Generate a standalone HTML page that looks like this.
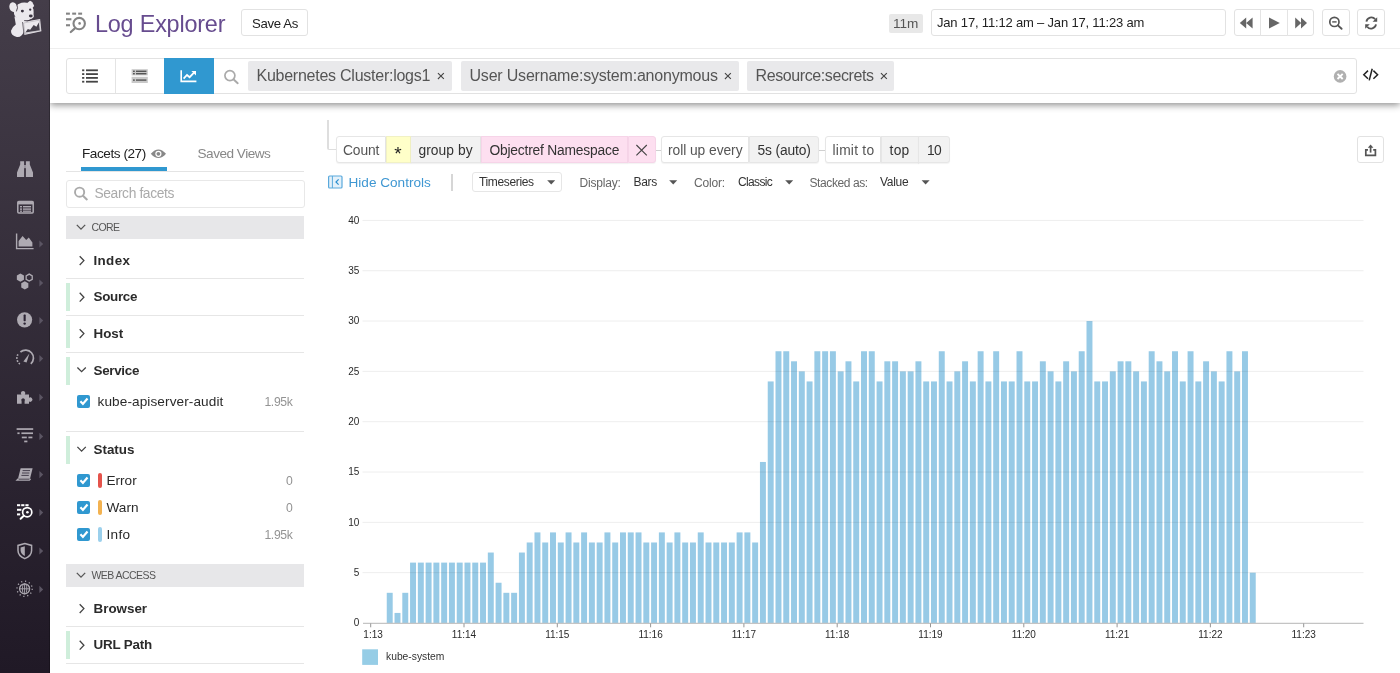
<!DOCTYPE html>
<html lang="en">
<head>
<meta charset="utf-8">
<title>Log Explorer</title>
<style>
*{box-sizing:border-box;margin:0;padding:0}
html,body{width:1400px;height:673px;overflow:hidden;background:#fff}
body{will-change:transform;font-family:"Liberation Sans",sans-serif;color:#333;position:relative;font-size:14px}
.abs,.t,.box,.btn,.tok,.pill,.hd,.sep,.gbar,.cb,.ic{position:absolute}
.t{white-space:nowrap;line-height:1}
svg{position:absolute;overflow:visible}
.chart{left:0;top:0}
#side{position:absolute;left:0;top:0;width:49.5px;z-index:2;height:673px;background:linear-gradient(180deg,#443d49 0%,#201926 100%);border-right:1px solid rgba(0,0,0,.25)}
#top{position:absolute;left:50px;top:0;width:1350px;height:103px;background:#fff;box-shadow:0 2px 7px 0 rgba(0,0,0,.45)}
#topline{position:absolute;left:50px;top:48px;width:1350px;height:1px;background:#eeeeee}
.btn{border:1px solid #e2e2e2;border-radius:3px;background:#fff}
.box{border:1px solid #e2e2e2;border-radius:3px;background:#fff}
.tok{top:61px;height:29.6px;background:#e9e9eb;border-radius:2px}
.pill{top:136.4px;height:27px;border:1px solid #e6e6e6;box-shadow:0 1px 1px rgba(0,0,0,.05)}
.hd{left:66px;width:238px;height:23px;background:#e7e7e9}
.sep{left:66px;width:238px;height:1px;background:#e6e6e6}
.gbar{left:66px;width:3.5px;background:#cfeedb}
.cb{left:76.7px;width:13.5px;height:13.5px;border-radius:2px;background:#3098d0}
.f{font-weight:700;font-size:13.4px;color:#2b2b2b;margin-top:.6px}
.v{font-size:13.6px;color:#2a2a2a}
.n{font-size:12.2px;color:#939393;letter-spacing:-.35px;margin-top:.7px}
.c{font-size:12px;color:#333}
.l{font-size:12px;color:#666}
</style>
</head>
<body>
<!-- sidebar -->
<div id="side"></div>
<!-- top -->
<div id="top"></div>
<div id="topline"></div>

<!--SIDEICONS-->

<!-- header -->
<div class="t" id="title" style="left:95px;top:13px;font-size:23.4px;color:#674c8f;letter-spacing:-.2px">Log Explorer</div>
<div class="btn" style="left:241.2px;top:9.2px;width:67px;height:27px"></div>
<div class="t" style="left:252px;top:16.5px;font-size:13.2px;color:#222;letter-spacing:-.35px">Save As</div>

<div class="abs" style="left:889px;top:14px;width:33.5px;height:18.5px;background:#e8e8e8;border-radius:2px"></div>
<div class="t" style="left:893px;top:16.5px;font-size:13.6px;color:#555">11m</div>
<div class="box" style="left:931px;top:9.2px;width:294.5px;height:27px"></div>
<div class="t" style="left:937px;top:16px;font-size:13px;color:#222;letter-spacing:-.18px">Jan 17, 11:12 am – Jan 17, 11:23 am</div>
<div class="btn" style="left:1233.5px;top:9.2px;width:80.5px;height:27px"></div>
<div class="abs" style="left:1260px;top:10px;width:1px;height:26px;background:#e4e4e4"></div>
<div class="abs" style="left:1286.5px;top:10px;width:1px;height:26px;background:#e4e4e4"></div>
<div class="btn" style="left:1322px;top:9.2px;width:27.5px;height:27px"></div>
<div class="btn" style="left:1357px;top:9.2px;width:27.5px;height:27px"></div>

<!-- search bar -->
<div class="box" style="left:66px;top:58px;width:1290.5px;height:35.5px"></div>
<div class="abs" style="left:114.5px;top:59px;width:1px;height:33.5px;background:#e4e4e4"></div>
<div class="abs" style="left:164px;top:58px;width:49.5px;height:35.5px;background:#3098d0"></div>
<div class="tok" style="left:248px;width:204px"></div>
<div class="t" style="left:256.5px;top:67.9px;font-size:16px;color:#555;letter-spacing:-.25px">Kubernetes Cluster:logs1</div>
<div class="t" style="left:436.5px;top:67.6px;font-size:15px;color:#444">×</div>
<div class="tok" style="left:460.5px;width:278px"></div>
<div class="t" style="left:469.5px;top:67.9px;font-size:16px;color:#555;letter-spacing:-.2px">User Username:system:anonymous</div>
<div class="t" style="left:723.5px;top:67.6px;font-size:15px;color:#444">×</div>
<div class="tok" style="left:747px;width:147px"></div>
<div class="t" style="left:755.5px;top:67.9px;font-size:16px;color:#555;letter-spacing:-.4px">Resource:secrets</div>
<div class="t" style="left:879.5px;top:67.6px;font-size:15px;color:#444">×</div>

<!-- left panel -->
<div class="t" style="left:82px;top:147.2px;font-size:13.6px;color:#222;letter-spacing:-.45px">Facets (27)</div>
<div class="t" style="left:197.5px;top:147.2px;font-size:13.6px;color:#888;letter-spacing:-.5px">Saved Views</div>
<div class="abs" style="left:66px;top:170.5px;width:238px;height:1px;background:#e4e4e4"></div>
<div class="abs" style="left:81px;top:167px;width:86px;height:4px;background:#3098d0"></div>
<div class="box" style="left:66px;top:180px;width:238.5px;height:27.5px;border-color:#e8e8e8"></div>
<div class="t" style="left:94.5px;top:186.5px;font-size:13.8px;color:#aaa;letter-spacing:-.38px">Search facets</div>

<div class="hd" style="top:215.5px"></div>
<div class="t" style="left:91.5px;top:222px;font-size:10.5px;color:#555;letter-spacing:-.6px">CORE</div>
<div class="t f" style="left:93.5px;top:253.5px;letter-spacing:.35px">Index</div>
<div class="sep" style="top:278px"></div>
<div class="gbar" style="top:283px;height:28px"></div>
<div class="t f" style="left:93.5px;top:289.3px;letter-spacing:-.3px">Source</div>
<div class="sep" style="top:315px"></div>
<div class="gbar" style="top:320px;height:28px"></div>
<div class="t f" style="left:93.5px;top:326.5px">Host</div>
<div class="sep" style="top:352px"></div>
<div class="gbar" style="top:357px;height:28px"></div>
<div class="t f" style="left:93.5px;top:363px;letter-spacing:-.3px">Service</div>
<div class="cb" style="top:394.5px"></div>
<div class="t v" style="left:97.5px;top:394.5px;letter-spacing:.1px">kube-apiserver-audit</div>
<div class="t n" style="right:1107.5px;top:395px">1.95k</div>
<div class="sep" style="top:431px"></div>
<div class="gbar" style="top:436px;height:28px"></div>
<div class="t f" style="left:93.5px;top:442px">Status</div>
<div class="cb" style="top:473.5px"></div>
<div class="abs" style="left:97.5px;top:472.5px;width:4.5px;height:15.5px;border-radius:2px;background:#e5534b"></div>
<div class="t v" style="left:106.5px;top:473.5px">Error</div>
<div class="t n" style="right:1107.5px;top:474px">0</div>
<div class="cb" style="top:500.5px"></div>
<div class="abs" style="left:97.5px;top:499.5px;width:4.5px;height:15.5px;border-radius:2px;background:#f3b250"></div>
<div class="t v" style="left:106.5px;top:500.5px">Warn</div>
<div class="t n" style="right:1107.5px;top:501px">0</div>
<div class="cb" style="top:527.5px"></div>
<div class="abs" style="left:97.5px;top:526.5px;width:4.5px;height:15.5px;border-radius:2px;background:#9bd0ec"></div>
<div class="t v" style="left:106.5px;top:527.5px;letter-spacing:.3px">Info</div>
<div class="t n" style="right:1107.5px;top:528px">1.95k</div>
<div class="hd" style="top:563.5px;height:23.2px"></div>
<div class="t" style="left:91.5px;top:570.2px;font-size:10.5px;color:#555;letter-spacing:-.55px">WEB ACCESS</div>
<div class="t f" style="left:93.5px;top:601.5px">Browser</div>
<div class="sep" style="top:626px"></div>
<div class="gbar" style="top:631.2px;height:27.4px"></div>
<div class="t f" style="left:93.5px;top:637.2px;letter-spacing:-.2px">URL Path</div>
<div class="sep" style="top:662.7px"></div>

<!-- query pills -->
<div class="abs" style="left:327px;top:120px;width:9px;height:30px;border-left:2px solid #dedede;border-bottom:1.5px solid #dedede;border-bottom-left-radius:2px"></div>
<div class="abs" style="left:655px;top:150px;width:7px;height:1px;background:#d0d0d0"></div>
<div class="abs" style="left:818px;top:150px;width:9px;height:1px;background:#d0d0d0"></div>
<div class="pill" style="left:336px;width:50px;background:#fff;border-radius:3px 0 0 3px"></div>
<div class="pill" style="left:386px;width:24.5px;background:#ffffc9;border-color:#f1f1c4"></div>
<div class="pill" style="left:410.5px;width:70.5px;background:#f2f2f2;border-left:0"></div>
<div class="pill" style="left:481px;width:147px;background:#fddff0;border-color:#f6d4e8"></div>
<div class="pill" style="left:628px;width:27.5px;background:#fddff0;border-color:#f6d4e8;border-radius:0 3px 3px 0"></div>
<div class="pill" style="left:660.8px;width:88.7px;background:#fff;border-radius:3px 0 0 3px"></div>
<div class="pill" style="left:749px;width:70px;background:#f2f2f2;border-radius:0 3px 3px 0"></div>
<div class="pill" style="left:825.4px;width:56.1px;background:#fff;border-radius:3px 0 0 3px"></div>
<div class="pill" style="left:881px;width:37.5px;background:#f2f2f2"></div>
<div class="pill" style="left:917.5px;width:32px;background:#f2f2f2;border-radius:0 3px 3px 0"></div>
<div class="t" style="left:343px;top:143.8px;font-size:13.8px;color:#555;letter-spacing:-.1px">Count</div>
<div class="t" style="left:394.3px;top:143.6px;font-size:19px;color:#222">*</div>
<div class="t" style="left:418.5px;top:143.8px;font-size:13.8px;color:#333;letter-spacing:.05px">group by</div>
<div class="t" style="left:489.5px;top:143.8px;font-size:13.8px;color:#333;letter-spacing:-.2px">Objectref Namespace</div>
<div class="t" style="left:668px;top:143.8px;font-size:13.8px;color:#555;letter-spacing:-.05px">roll up every</div>
<div class="t" style="left:757.5px;top:143.8px;font-size:13.8px;color:#333;letter-spacing:-.15px">5s (auto)</div>
<div class="t" style="left:832.5px;top:143.8px;font-size:13.8px;color:#555;letter-spacing:.25px">limit to</div>
<div class="t" style="left:889.5px;top:143.8px;font-size:13.8px;color:#333;letter-spacing:.3px">top</div>
<div class="t" style="left:927px;top:143.8px;font-size:13.8px;color:#333;letter-spacing:-.7px">10</div>
<div class="btn" style="left:1356.8px;top:136.4px;width:27px;height:27px"></div>

<!-- controls row -->
<div class="t" style="left:348.5px;top:175.6px;font-size:13.6px;color:#3f97d2;letter-spacing:0px">Hide Controls</div>
<div class="abs" style="left:451px;top:173.5px;width:1.5px;height:17px;background:#d6d6d6"></div>
<div class="box" style="left:471.8px;top:171.8px;width:90.6px;height:20px;border-color:#e6e6e6"></div>
<div class="t c" style="left:479px;top:175.5px;letter-spacing:-.35px">Timeseries</div>
<div class="t l" style="left:579.5px;top:176.5px;letter-spacing:-.2px">Display:</div>
<div class="t c" style="left:633.5px;top:175.5px;letter-spacing:-.3px">Bars</div>
<div class="t l" style="left:694px;top:176.5px;letter-spacing:-.2px">Color:</div>
<div class="t c" style="left:738px;top:175.5px;letter-spacing:-.65px">Classic</div>
<div class="t l" style="left:809.5px;top:176.5px;letter-spacing:-.4px">Stacked as:</div>
<div class="t c" style="left:880px;top:175.5px;letter-spacing:-.3px">Value</div>

<svg width="1400" height="673" viewBox="0 0 1400 673" style="left:0;top:0;z-index:3"><g fill="#ebe8ed">
<ellipse cx="13.3" cy="7.2" rx="3.9" ry="4.9" transform="rotate(-18 13.3 7.2)"/>
<path d="M26.6 3.6L30 0.8Q32.4 1.4 34.2 6L31.6 8.8Z"/>
<ellipse cx="23.8" cy="11.8" rx="10" ry="9.2" transform="rotate(-14 23.8 11.8)"/>
<path d="M28 8Q34.4 12.6 33.8 17Q30 21 25 20.4Z"/>
<path d="M14.4 16.5L27 21.5L24 31Q21.8 37.8 16.8 37Q10.8 35.6 11 30.8Q12.4 26.8 15.8 24.6Z"/>
<path d="M22.5 22L40.1 18.9L41.4 31.2L24.1 34.9Z"/>
</g>
<path d="M16.8 4.4Q18.4 7.6 16.4 11.4" fill="none" stroke="#3f3844" stroke-width=".9"/>
<path d="M24.2 20.6Q28.4 21.6 31 19.6" fill="none" stroke="#3f3844" stroke-width=".9"/>
<path d="M23.6 23L39.4 20.2L40.3 30.4L25 33.6Z" fill="none" stroke="#a9a5ad" stroke-width=".5"/>
<path d="M25.4 32.6L27.8 29.1L30.2 29.7L33.7 25L36.4 26.8L38.8 22.6L39.8 30.2Z" fill="#45404b"/>
<ellipse cx="22.4" cy="11.1" rx="1.5" ry="1.3" fill="#3a3440"/>
<ellipse cx="30.2" cy="9.6" rx="1.1" ry="1.2" fill="#3a3440"/>
<ellipse cx="30.8" cy="16" rx="1.9" ry="1.4" fill="#3a3440"/>
<path d="M22.5 22L24.1 34.9" stroke="#55505a" stroke-width=".8"/><g fill="#aeaab2"><path d="M20.2 161.2h3.9v15.8h-7.1v-4.6l3.2-8z"/><path d="M29.8 161.2h-3.9v15.8h7.1v-4.6l-3.2-8z"/><rect x="24" y="165" width="2" height="3.2" opacity=".8"/></g><g fill="none" stroke="#aeaab2" stroke-width="1.5"><rect x="17.8" y="201.4" width="15.4" height="11.6" rx="1"/></g><g fill="#aeaab2"><rect x="17.8" y="201.4" width="15.4" height="3"/><rect x="20" y="206" width="2" height="1.4"/><rect x="23" y="206" width="8" height="1.4"/><rect x="20" y="208.4" width="2" height="1.4"/><rect x="23" y="208.4" width="8" height="1.4"/><rect x="20" y="210.6" width="2" height="1.2"/><rect x="23" y="210.6" width="8" height="1.2"/></g><g><path d="M16.6 233.5V248.6H33.6" fill="none" stroke="#aeaab2" stroke-width="1.4"/><path d="M18.6 246.6V241l4-5 3.6 4 2.6-2.6 3.6 5v4.2z" fill="#aeaab2"/></g><path d="M39.4 240.4L43.199999999999996 244L39.4 247.6Z" fill="#5b5563"/><polygon points="23.95,279.65 20.40,281.70 16.85,279.65 16.85,275.55 20.40,273.50 23.95,275.55" fill="#aeaab2"/><polygon points="32.23,279.35 29.20,281.10 26.17,279.35 26.17,275.85 29.20,274.10 32.23,275.85" fill="none" stroke="#aeaab2" stroke-width="1.3"/><polygon points="28.35,287.45 24.80,289.50 21.25,287.45 21.25,283.35 24.80,281.30 28.35,283.35" fill="#aeaab2"/><path d="M39.4 279.4L43.199999999999996 283L39.4 286.6Z" fill="#5b5563"/><circle cx="24.6" cy="319.8" r="7.6" fill="#aeaab2"/><rect x="23.6" y="314.6" width="2.1" height="6.6" rx=".6" fill="#2b2333"/><circle cx="24.65" cy="323.6" r="1.2" fill="#2b2333"/><path d="M39.4 317.0L43.199999999999996 320.6L39.4 324.20000000000005Z" fill="#5b5563"/><path d="M19.9 364A7.3 7.3 0 0 1 18.6 353.4" fill="none" stroke="#aeaab2" stroke-width="1.6" stroke-dasharray="1.6 1.4"/><path d="M20.4 352A7.3 7.3 0 0 1 30.8 363.8" fill="none" stroke="#aeaab2" stroke-width="1.7"/><path d="M23.4 361.6L29.4 353.4L26.6 362.4Z" fill="#aeaab2"/><path d="M39.4 355.0L43.199999999999996 358.6L39.4 362.20000000000005Z" fill="#5b5563"/><path d="M17 394.6h4.4a2.2 2.2 0 1 1 3.4 0h4.2v3.2a2.2 2.2 0 1 1 0 3.6v2.4h-4.4v-2.6a1.8 1.8 0 1 0 -3 0v2.6h-4.6z" fill="#aeaab2"/><path d="M39.4 393.79999999999995L43.199999999999996 397.4L39.4 401.0Z" fill="#5b5563"/><g fill="#aeaab2"><rect x="16.6" y="428.2" width="16.6" height="1.7"/><rect x="17.4" y="432.4" width="2.2" height="1.7"/><rect x="21.4" y="432.4" width="11.6" height="1.7"/><rect x="21.8" y="436.6" width="5" height="1.7"/><rect x="28.4" y="436.6" width="4" height="1.7"/><rect x="24.2" y="440.6" width="3.2" height="1.7"/></g><path d="M39.4 432.79999999999995L43.199999999999996 436.4L39.4 440.0Z" fill="#5b5563"/><g><path d="M20.6 468.2h12l-2.6 10.6h-12z" fill="#aeaab2"/><path d="M18.4 478.8l-1.4 1.4h12.4l1.2-1.4" fill="none" stroke="#aeaab2" stroke-width="1.3"/><path d="M22.6 470.6h7.4M22 473h7.4M21.4 475.4h7.4" stroke="#2b2333" stroke-width=".8"/></g><path d="M39.4 471.0L43.199999999999996 474.6L39.4 478.20000000000005Z" fill="#5b5563"/><g fill="#ffffff"><rect x="17" y="504.2" width="3.2" height="2"/><rect x="21.2" y="504.2" width="3.2" height="2"/><rect x="25.4" y="504.2" width="3.2" height="2"/><rect x="17" y="508.8" width="4.4" height="2"/><rect x="17" y="513.4" width="3.2" height="2"/></g><circle cx="27.2" cy="512.2" r="4.6" fill="none" stroke="#ffffff" stroke-width="1.7"/><circle cx="27.4" cy="512.2" r="1.3" fill="#ffffff"/><path d="M23.8 515.8L20.6 518.8" stroke="#ffffff" stroke-width="2" stroke-linecap="round"/><path d="M39.4 509.0L43.199999999999996 512.6L39.4 516.2Z" fill="#5b5563"/><path d="M24.8 543.6l6.8 1.8v5.2c0 4-3 6.6-6.8 8c-3.8-1.4-6.8-4-6.8-8v-5.2z" fill="none" stroke="#aeaab2" stroke-width="1.5"/><path d="M24.8 546.2v9.8c-2.4-1-4.2-2.8-4.2-5.4v-3.2z" fill="#aeaab2"/><path d="M39.4 547.4L43.199999999999996 551L39.4 554.6Z" fill="#5b5563"/><g fill="none" stroke="#aeaab2"><circle cx="24.6" cy="588.8" r="5" stroke-width="1.3"/><ellipse cx="24.6" cy="588.8" rx="2.2" ry="5" stroke-width=".9"/><path d="M19.6 588.8h10M24.6 583.8v10" stroke-width=".9"/><circle cx="24.6" cy="588.8" r="7.6" stroke-width="1.3" stroke-dasharray="1.2 2.8"/></g><path d="M39.4 585.8L43.199999999999996 589.4L39.4 593.0Z" fill="#5b5563"/><g fill="#848484"><rect x="66" y="12.6" width="3.9" height="2.1"/><rect x="72.2" y="12.6" width="3.9" height="2.1"/><rect x="78.2" y="12.6" width="3.9" height="2.1"/><rect x="66" y="18.2" width="5.4" height="2.1"/><rect x="66" y="24.2" width="4" height="2.1"/></g><circle cx="79.2" cy="23.6" r="5.7" fill="none" stroke="#848484" stroke-width="2.1"/><circle cx="79.6" cy="23.4" r="1.3" fill="#848484"/><path d="M74.6 28.6L70.8 32" stroke="#848484" stroke-width="2.2" stroke-linecap="round"/><g fill="#666"><path d="M1246.2 17.4v11.2l-6.4-5.6zM1252.6 17.4v11.2l-6.4-5.6z"/><path d="M1269 17.4l10.8 5.6l-10.8 5.6z"/><path d="M1295.2 17.4l6 5.6l-6 5.6zM1301 17.4l6 5.6l-6 5.6z"/></g><circle cx="1334.4" cy="21.9" r="4.6" fill="none" stroke="#555" stroke-width="1.7"/><path d="M1337.9 25.4L1341.6 28.8" stroke="#555" stroke-width="1.9" stroke-linecap="round"/><rect x="1332.2" y="21.2" width="4.4" height="1.4" fill="#555"/><g fill="none" stroke="#555" stroke-width="1.8"><path d="M1366.4 21.6a5 5 0 0 1 8.8-2.4"/><path d="M1376 24.4a5 5 0 0 1 -8.8 2.4"/></g><path d="M1377.2 17.2v4.6h-4.6z" fill="#555"/><path d="M1365.2 28.8v-4.6h4.6z" fill="#555"/><g fill="#444"><rect x="82.1" y="69.4" width="2.2" height="1.8"/><rect x="86" y="69.4" width="11.9" height="1.8"/><rect x="82.1" y="73.2" width="2.2" height="1.8"/><rect x="86" y="73.2" width="11.9" height="1.8"/><rect x="82.1" y="77" width="2.2" height="1.8"/><rect x="86" y="77" width="11.9" height="1.8"/><rect x="82.1" y="80.8" width="2.2" height="1.8"/><rect x="86" y="80.8" width="11.9" height="1.8"/></g><g><rect x="131.6" y="69.2" width="16.2" height="6.2" fill="#c9c9c9"/><rect x="131.6" y="76.8" width="16.2" height="6.2" fill="#c9c9c9"/><g fill="#555"><rect x="133" y="70.6" width="1.8" height="1.4"/><rect x="136" y="70.6" width="10.4" height="1.4"/><rect x="133" y="73" width="1.8" height="1.4"/><rect x="136" y="73" width="10.4" height="1.4"/><rect x="133" y="79.4" width="1.8" height="1.4"/><rect x="136" y="79.4" width="10.4" height="1.4"/></g></g><g fill="none" stroke="#fff" stroke-width="1.6"><path d="M181.2 70.2V81.4H196.4"/><path d="M183.6 78.6l3.4-3.6 2.6 2.2 4.4-4.6" stroke-width="1.8"/></g><path d="M191.4 71h4.6v4.6z" fill="#fff"/><circle cx="229.9" cy="75.6" r="5" fill="none" stroke="#aaa" stroke-width="1.7"/><path d="M233.7 79.6L237.7 83.2" stroke="#aaa" stroke-width="2" stroke-linecap="round"/><circle cx="1340.1" cy="76.4" r="6.3" fill="#b0b0b0"/><path d="M1337.5 73.8l5.2 5.2M1342.7 73.8l-5.2 5.2" stroke="#fff" stroke-width="1.9"/><g fill="none" stroke="#222" stroke-width="1.5"><path d="M1368 70.6l-4.2 4.1 4.2 4.1"/><path d="M1373.4 70.6l4.2 4.1 -4.2 4.1"/><path d="M1372.2 68.8l-3 11.6"/></g><g fill="none" stroke="#555" stroke-width="1.7"><path d="M1368 149.8h-2.2v5.6h9.6v-5.6h-2.2"/><path d="M1370.6 152.6v-6.4"/></g><path d="M1367.8 147.8l2.8-3.2 2.8 3.2z" fill="#555"/><path d="M150.8 153.8q7.6-8.6 15.2 0q-7.6 8.6-15.2 0z" fill="#888"/><circle cx="158.4" cy="153.8" r="3.1" fill="#fff"/><circle cx="158.4" cy="153.8" r="1.9" fill="#888"/><circle cx="79.6" cy="192.2" r="4.6" fill="none" stroke="#aaa" stroke-width="1.9"/><path d="M83 195.8L86.8 199.4" stroke="#aaa" stroke-width="2.1" stroke-linecap="round"/><path d="M76.8 224.9l4.2 4.2l4.2-4.2" fill="none" stroke="#555" stroke-width="1.3"/><path d="M76.8 572.9l4.2 4.2l4.2-4.2" fill="none" stroke="#555" stroke-width="1.3"/><path d="M79.7 256.20000000000005l4.2 4.4l-4.2 4.4" fill="none" stroke="#444" stroke-width="1.3"/><path d="M79.7 292.8l4.2 4.4l-4.2 4.4" fill="none" stroke="#444" stroke-width="1.3"/><path d="M79.7 329.20000000000005l4.2 4.4l-4.2 4.4" fill="none" stroke="#444" stroke-width="1.3"/><path d="M79.7 604.2l4.2 4.4l-4.2 4.4" fill="none" stroke="#444" stroke-width="1.3"/><path d="M79.7 640.8000000000001l4.2 4.4l-4.2 4.4" fill="none" stroke="#444" stroke-width="1.3"/><path d="M77.39999999999999 367.5l4.2 4.2l4.2-4.2" fill="none" stroke="#444" stroke-width="1.3"/><path d="M77.39999999999999 446.9l4.2 4.2l4.2-4.2" fill="none" stroke="#444" stroke-width="1.3"/><path d="M80.4 401.3l2.5 2.6l4.6-5.4" fill="none" stroke="#fff" stroke-width="2.2"/><path d="M80.4 480.3l2.5 2.6l4.6-5.4" fill="none" stroke="#fff" stroke-width="2.2"/><path d="M80.4 507.3l2.5 2.6l4.6-5.4" fill="none" stroke="#fff" stroke-width="2.2"/><path d="M80.4 534.3l2.5 2.6l4.6-5.4" fill="none" stroke="#fff" stroke-width="2.2"/><path d="M636.4 145l10.4 10.4M646.8 145l-10.4 10.4" stroke="#444" stroke-width="1.1" fill="none"/><rect x="328.6" y="176" width="13.4" height="12" rx="1" fill="#e4f1fa" stroke="#5aa9dc" stroke-width="1.2"/><path d="M332.4 176v12" stroke="#5aa9dc" stroke-width="1"/><path d="M338.6 179.4l-2.6 2.6l2.6 2.6" fill="none" stroke="#2b8fd0" stroke-width="1.2"/><path d="M547.2 180.2h8l-4 4.4z" fill="#555"/><path d="M669.2 180.2h8l-4 4.4z" fill="#555"/><path d="M785.2 180.2h8l-4 4.4z" fill="#555"/><path d="M921.6 180.2h8l-4 4.4z" fill="#555"/></svg>
<svg class="chart" width="1400" height="673" viewBox="0 0 1400 673">
<defs><clipPath id="cc"><rect x="364" y="200" width="1010" height="460"/></clipPath></defs>
<g fill="#97cae6"><rect x="386.75" y="592.80" width="5.95" height="30.20"/><rect x="394.52" y="612.93" width="5.95" height="10.06"/><rect x="402.30" y="592.80" width="5.95" height="30.20"/><rect x="410.07" y="562.61" width="5.95" height="60.39"/><rect x="417.85" y="562.61" width="5.95" height="60.39"/><rect x="425.62" y="562.61" width="5.95" height="60.39"/><rect x="433.40" y="562.61" width="5.95" height="60.39"/><rect x="441.18" y="562.61" width="5.95" height="60.39"/><rect x="448.95" y="562.61" width="5.95" height="60.39"/><rect x="456.73" y="562.61" width="5.95" height="60.39"/><rect x="464.50" y="562.61" width="5.95" height="60.39"/><rect x="472.27" y="562.61" width="5.95" height="60.39"/><rect x="480.05" y="562.61" width="5.95" height="60.39"/><rect x="487.82" y="552.54" width="5.95" height="70.45"/><rect x="495.60" y="582.74" width="5.95" height="40.26"/><rect x="503.38" y="592.80" width="5.95" height="30.20"/><rect x="511.15" y="592.80" width="5.95" height="30.20"/><rect x="518.92" y="552.54" width="5.95" height="70.45"/><rect x="526.70" y="542.48" width="5.95" height="80.52"/><rect x="534.48" y="532.41" width="5.95" height="90.58"/><rect x="542.25" y="542.48" width="5.95" height="80.52"/><rect x="550.02" y="532.41" width="5.95" height="90.58"/><rect x="557.80" y="542.48" width="5.95" height="80.52"/><rect x="565.58" y="532.41" width="5.95" height="90.58"/><rect x="573.35" y="542.48" width="5.95" height="80.52"/><rect x="581.12" y="532.41" width="5.95" height="90.58"/><rect x="588.90" y="542.48" width="5.95" height="80.52"/><rect x="596.67" y="542.48" width="5.95" height="80.52"/><rect x="604.45" y="532.41" width="5.95" height="90.58"/><rect x="612.23" y="542.48" width="5.95" height="80.52"/><rect x="620.00" y="532.41" width="5.95" height="90.58"/><rect x="627.77" y="532.41" width="5.95" height="90.58"/><rect x="635.55" y="532.41" width="5.95" height="90.58"/><rect x="643.33" y="542.48" width="5.95" height="80.52"/><rect x="651.10" y="542.48" width="5.95" height="80.52"/><rect x="658.88" y="532.41" width="5.95" height="90.58"/><rect x="666.65" y="542.48" width="5.95" height="80.52"/><rect x="674.42" y="532.41" width="5.95" height="90.58"/><rect x="682.20" y="542.48" width="5.95" height="80.52"/><rect x="689.98" y="542.48" width="5.95" height="80.52"/><rect x="697.75" y="532.41" width="5.95" height="90.58"/><rect x="705.52" y="542.48" width="5.95" height="80.52"/><rect x="713.30" y="542.48" width="5.95" height="80.52"/><rect x="721.08" y="542.48" width="5.95" height="80.52"/><rect x="728.85" y="542.48" width="5.95" height="80.52"/><rect x="736.62" y="532.41" width="5.95" height="90.58"/><rect x="744.40" y="532.41" width="5.95" height="90.58"/><rect x="752.17" y="542.48" width="5.95" height="80.52"/><rect x="759.95" y="461.96" width="5.95" height="161.04"/><rect x="767.73" y="381.44" width="5.95" height="241.56"/><rect x="775.50" y="351.25" width="5.95" height="271.75"/><rect x="783.28" y="351.25" width="5.95" height="271.75"/><rect x="791.05" y="361.31" width="5.95" height="261.69"/><rect x="798.83" y="371.38" width="5.95" height="251.62"/><rect x="806.60" y="381.44" width="5.95" height="241.56"/><rect x="814.38" y="351.25" width="5.95" height="271.75"/><rect x="822.15" y="351.25" width="5.95" height="271.75"/><rect x="829.92" y="351.25" width="5.95" height="271.75"/><rect x="837.70" y="371.38" width="5.95" height="251.62"/><rect x="845.48" y="361.31" width="5.95" height="261.69"/><rect x="853.25" y="381.44" width="5.95" height="241.56"/><rect x="861.03" y="351.25" width="5.95" height="271.75"/><rect x="868.80" y="351.25" width="5.95" height="271.75"/><rect x="876.58" y="381.44" width="5.95" height="241.56"/><rect x="884.35" y="361.31" width="5.95" height="261.69"/><rect x="892.12" y="361.31" width="5.95" height="261.69"/><rect x="899.90" y="371.38" width="5.95" height="251.62"/><rect x="907.67" y="371.38" width="5.95" height="251.62"/><rect x="915.45" y="361.31" width="5.95" height="261.69"/><rect x="923.23" y="381.44" width="5.95" height="241.56"/><rect x="931.00" y="381.44" width="5.95" height="241.56"/><rect x="938.78" y="351.25" width="5.95" height="271.75"/><rect x="946.55" y="381.44" width="5.95" height="241.56"/><rect x="954.33" y="371.38" width="5.95" height="251.62"/><rect x="962.10" y="361.31" width="5.95" height="261.69"/><rect x="969.88" y="381.44" width="5.95" height="241.56"/><rect x="977.65" y="351.25" width="5.95" height="271.75"/><rect x="985.43" y="381.44" width="5.95" height="241.56"/><rect x="993.20" y="351.25" width="5.95" height="271.75"/><rect x="1000.98" y="381.44" width="5.95" height="241.56"/><rect x="1008.75" y="381.44" width="5.95" height="241.56"/><rect x="1016.52" y="351.25" width="5.95" height="271.75"/><rect x="1024.30" y="381.44" width="5.95" height="241.56"/><rect x="1032.08" y="381.44" width="5.95" height="241.56"/><rect x="1039.85" y="361.31" width="5.95" height="261.69"/><rect x="1047.62" y="371.38" width="5.95" height="251.62"/><rect x="1055.40" y="381.44" width="5.95" height="241.56"/><rect x="1063.18" y="361.31" width="5.95" height="261.69"/><rect x="1070.95" y="371.38" width="5.95" height="251.62"/><rect x="1078.72" y="351.25" width="5.95" height="271.75"/><rect x="1086.50" y="321.05" width="5.95" height="301.95"/><rect x="1094.28" y="381.44" width="5.95" height="241.56"/><rect x="1102.05" y="381.44" width="5.95" height="241.56"/><rect x="1109.83" y="371.38" width="5.95" height="251.62"/><rect x="1117.60" y="361.31" width="5.95" height="261.69"/><rect x="1125.38" y="361.31" width="5.95" height="261.69"/><rect x="1133.15" y="371.38" width="5.95" height="251.62"/><rect x="1140.93" y="381.44" width="5.95" height="241.56"/><rect x="1148.70" y="351.25" width="5.95" height="271.75"/><rect x="1156.47" y="361.31" width="5.95" height="261.69"/><rect x="1164.25" y="371.38" width="5.95" height="251.62"/><rect x="1172.03" y="351.25" width="5.95" height="271.75"/><rect x="1179.80" y="381.44" width="5.95" height="241.56"/><rect x="1187.58" y="351.25" width="5.95" height="271.75"/><rect x="1195.35" y="381.44" width="5.95" height="241.56"/><rect x="1203.12" y="361.31" width="5.95" height="261.69"/><rect x="1210.90" y="371.38" width="5.95" height="251.62"/><rect x="1218.68" y="381.44" width="5.95" height="241.56"/><rect x="1226.45" y="351.25" width="5.95" height="271.75"/><rect x="1234.22" y="371.38" width="5.95" height="251.62"/><rect x="1242.00" y="351.25" width="5.95" height="271.75"/><rect x="1249.78" y="572.67" width="5.95" height="50.32"/></g>
<g stroke="#000" stroke-opacity="0.07" stroke-width="1"><line x1="362.5" x2="1363.5" y1="572.67" y2="572.67"/><line x1="362.5" x2="1363.5" y1="522.35" y2="522.35"/><line x1="362.5" x2="1363.5" y1="472.02" y2="472.02"/><line x1="362.5" x2="1363.5" y1="421.70" y2="421.70"/><line x1="362.5" x2="1363.5" y1="371.38" y2="371.38"/><line x1="362.5" x2="1363.5" y1="321.05" y2="321.05"/><line x1="362.5" x2="1363.5" y1="270.73" y2="270.73"/><line x1="362.5" x2="1363.5" y1="220.40" y2="220.40"/></g>
<g stroke="#ebebeb" stroke-opacity="0.0" stroke-width="1"></g>
<line x1="363" x2="1363.5" y1="623.3" y2="623.3" stroke="#c4c4c4" stroke-width="1.2"/>
<g font-family="'Liberation Sans',sans-serif" font-size="10" fill="#2a2a2a"><text x="359.4" y="626.40" text-anchor="end">0</text><text x="359.4" y="576.07" text-anchor="end">5</text><text x="359.4" y="525.75" text-anchor="end">10</text><text x="359.4" y="475.42" text-anchor="end">15</text><text x="359.4" y="425.10" text-anchor="end">20</text><text x="359.4" y="374.77" text-anchor="end">25</text><text x="359.4" y="324.45" text-anchor="end">30</text><text x="359.4" y="274.12" text-anchor="end">35</text><text x="359.4" y="223.80" text-anchor="end">40</text></g>
<g clip-path="url(#cc)" font-family="'Liberation Sans',sans-serif" font-size="10" fill="#2a2a2a"><line x1="370.7" x2="370.7" y1="623.5" y2="627.3" stroke="#8a8a8a" stroke-width="0.9"/><text x="370.7" y="638.2" text-anchor="middle">11:13</text><line x1="464.0" x2="464.0" y1="623.5" y2="627.3" stroke="#8a8a8a" stroke-width="0.9"/><text x="464.0" y="638.2" text-anchor="middle">11:14</text><line x1="557.3" x2="557.3" y1="623.5" y2="627.3" stroke="#8a8a8a" stroke-width="0.9"/><text x="557.3" y="638.2" text-anchor="middle">11:15</text><line x1="650.6" x2="650.6" y1="623.5" y2="627.3" stroke="#8a8a8a" stroke-width="0.9"/><text x="650.6" y="638.2" text-anchor="middle">11:16</text><line x1="743.9" x2="743.9" y1="623.5" y2="627.3" stroke="#8a8a8a" stroke-width="0.9"/><text x="743.9" y="638.2" text-anchor="middle">11:17</text><line x1="837.2" x2="837.2" y1="623.5" y2="627.3" stroke="#8a8a8a" stroke-width="0.9"/><text x="837.2" y="638.2" text-anchor="middle">11:18</text><line x1="930.5" x2="930.5" y1="623.5" y2="627.3" stroke="#8a8a8a" stroke-width="0.9"/><text x="930.5" y="638.2" text-anchor="middle">11:19</text><line x1="1023.8" x2="1023.8" y1="623.5" y2="627.3" stroke="#8a8a8a" stroke-width="0.9"/><text x="1023.8" y="638.2" text-anchor="middle">11:20</text><line x1="1117.1" x2="1117.1" y1="623.5" y2="627.3" stroke="#8a8a8a" stroke-width="0.9"/><text x="1117.1" y="638.2" text-anchor="middle">11:21</text><line x1="1210.4" x2="1210.4" y1="623.5" y2="627.3" stroke="#8a8a8a" stroke-width="0.9"/><text x="1210.4" y="638.2" text-anchor="middle">11:22</text><line x1="1303.7" x2="1303.7" y1="623.5" y2="627.3" stroke="#8a8a8a" stroke-width="0.9"/><text x="1303.7" y="638.2" text-anchor="middle">11:23</text></g>
<rect x="362.2" y="649.3" width="15.8" height="15.6" fill="#96cde6"/>
<text x="386" y="660" font-family="'Liberation Sans',sans-serif" font-size="10.3" fill="#333">kube-system</text>
</svg>
</body>
</html>
